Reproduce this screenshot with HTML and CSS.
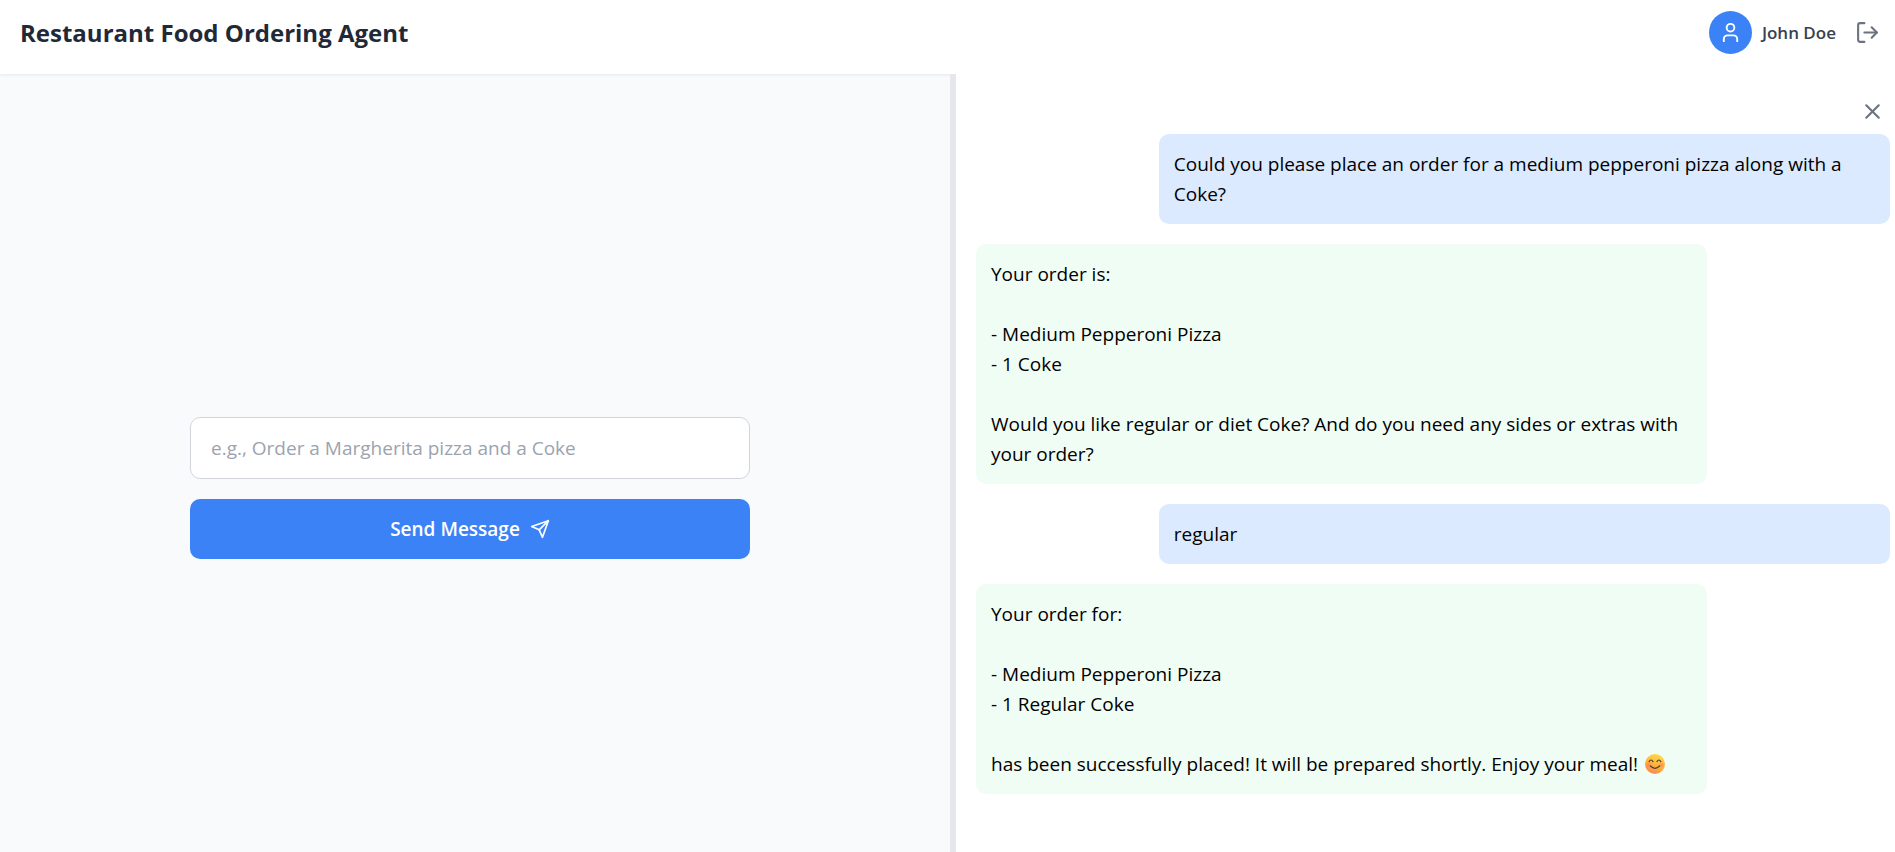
FILE: index.html
```html
<!DOCTYPE html>
<html lang="en">
<head>
<meta charset="utf-8">
<title>Restaurant Food Ordering Agent</title>
<link rel="stylesheet" href="styles.css">
</head>
<body>
<header class="header">
  <h1 class="title">Restaurant Food Ordering Agent</h1>
  <div class="account">
    <span class="avatar"><svg class="icon icon-user" viewBox="0 0 24 24"><path d="M19 21v-2a4 4 0 0 0-4-4H9a4 4 0 0 0-4 4v2"/><circle cx="12" cy="7" r="4"/></svg></span>
    <span class="name">John Doe</span>
    <button class="icon-button" type="button" aria-label="Log out"><svg class="icon" viewBox="0 0 24 24"><path d="M9 21H5a2 2 0 0 1-2-2V5a2 2 0 0 1 2-2h4"/><path d="M16 17l5-5-5-5"/><path d="M21 12H9"/></svg></button>
  </div>
</header>
<main class="main">
  <section class="compose">
    <form class="form">
      <input class="field" type="text" aria-label="Message" placeholder="e.g., Order a Margherita pizza and a Coke">
      <button class="send" type="button">Send Message <svg class="icon icon-send" viewBox="0 0 24 24"><path d="M22 2L11 13"/><path d="M22 2l-7 20-4-9-9-4z"/></svg></button>
    </form>
  </section>
  <section class="chat">
    <div class="chat-bar">
      <button class="icon-button" type="button" aria-label="Close chat"><svg class="icon" viewBox="0 0 24 24"><path d="M18 6L6 18"/><path d="M6 6l12 12"/></svg></button>
    </div>
    <div class="messages">
      <div class="message user">Could you please place an order for a medium pepperoni pizza along with a Coke?</div>
      <div class="message agent">Your order is:

- Medium Pepperoni Pizza
- 1 Coke

Would you like regular or diet Coke? And do you need any sides or extras with your order?</div>
      <div class="message user">regular</div>
      <div class="message agent">Your order for:

- Medium Pepperoni Pizza
- 1 Regular Coke

has been successfully placed! It will be prepared shortly. Enjoy your meal! <svg class="emoji" viewBox="0 0 20 20" role="img" aria-label="Smiling face"><defs><linearGradient id="face" x1="0.7" y1="0" x2="0.3" y2="1"><stop offset="0" stop-color="#ffdc4d"/><stop offset="0.6" stop-color="#ffae35"/><stop offset="1" stop-color="#f5855c"/></linearGradient><radialGradient id="blush"><stop offset="0" stop-color="#ff7a5c" stop-opacity="0.7"/><stop offset="1" stop-color="#ff7a5c" stop-opacity="0"/></radialGradient></defs><circle cx="10" cy="10" r="10" fill="url(#face)"/><circle cx="3.5" cy="11" r="3.5" fill="url(#blush)"/><circle cx="16.5" cy="11" r="3.5" fill="url(#blush)"/><path d="M4.2 7.6q1.8-3.2 3.8 0M12 7.6q2-3.2 3.8 0M5.4 12q4.6 4.6 9.2 0" fill="none" stroke="#523746" stroke-width="1.2" stroke-linecap="round"/></svg></div>
    </div>
  </section>
</main>
</body>
</html>
```
FILE: styles.css
```css
* {
  box-sizing: border-box;
}

body {
  margin: 0;
  min-height: 100vh;
  display: flex;
  flex-direction: column;
  background: #fff;
  color: #000;
  font-family: "Segoe UI", "Open Sans", "Noto Sans", sans-serif;
  font-size: 19px;
  line-height: 30px;
}

button,
input {
  font: inherit;
}

.icon {
  display: block;
  width: 25px;
  height: 25px;
  fill: none;
  stroke: currentColor;
  stroke-width: 2;
  stroke-linecap: round;
  stroke-linejoin: round;
}

.icon-button {
  padding: 0;
  border: 0;
  background: none;
  color: #6b7280;
  cursor: pointer;
}

.header {
  position: relative;
  z-index: 1;
  padding: 11px 15px 20px 20px;
  display: flex;
  align-items: center;
  justify-content: space-between;
  box-shadow: 0 1px 3px rgba(0, 0, 0, 0.08);
}

.title {
  margin: 0;
  color: #1f2937;
  font-size: 24px;
  font-weight: 700;
}

.account {
  display: flex;
  align-items: center;
}

.avatar {
  width: 43px;
  height: 43px;
  margin-right: 10px;
  display: grid;
  place-items: center;
  border-radius: 50%;
  background: #3b82f6;
  color: #fff;
}

.icon-user {
  width: 23px;
  height: 23px;
}

.name {
  margin-right: 19px;
  color: #374151;
  font-size: 17px;
  font-weight: 600;
}

.main {
  flex: 1;
  display: grid;
  grid-template-columns: 190fr 189fr;
}

.compose {
  padding: 50px 10px 0 0;
  display: flex;
  align-items: center;
  justify-content: center;
  background: #f9fafb;
}

.form {
  width: 100%;
  max-width: 560px;
  display: flex;
  flex-direction: column;
  gap: 20px;
}

.field {
  padding: 15px 20px;
  border: 1px solid #d1d5db;
  border-radius: 10px;
  background: #fff;
}

.field::placeholder {
  color: #9ca3af;
  opacity: 1;
}

.send {
  padding: 15px;
  display: flex;
  align-items: center;
  justify-content: center;
  gap: 10px;
  border: 0;
  border-radius: 10px;
  background: #3b82f6;
  color: #fff;
  font-weight: 600;
  cursor: pointer;
}

.icon-send {
  width: 20px;
  height: 20px;
}

.chat {
  position: relative;
  z-index: 2;
  padding: 25px 5px 20px 20px;
  border-left: 6px solid #e5e7eb;
  background: #fff;
}

.chat-bar {
  padding: 0 5px 10px;
  display: flex;
  justify-content: flex-end;
}

.messages {
  display: flex;
  flex-direction: column;
  gap: 20px;
}

.message {
  width: 80%;
  padding: 15px;
  border-radius: 10px;
  white-space: pre-wrap;
}

.user {
  align-self: flex-end;
  background: #dbeafe;
}

.agent {
  background: #f0fdf4;
}

.emoji {
  width: 20px;
  height: 20px;
  margin-left: 2px;
  vertical-align: -3px;
}
```
